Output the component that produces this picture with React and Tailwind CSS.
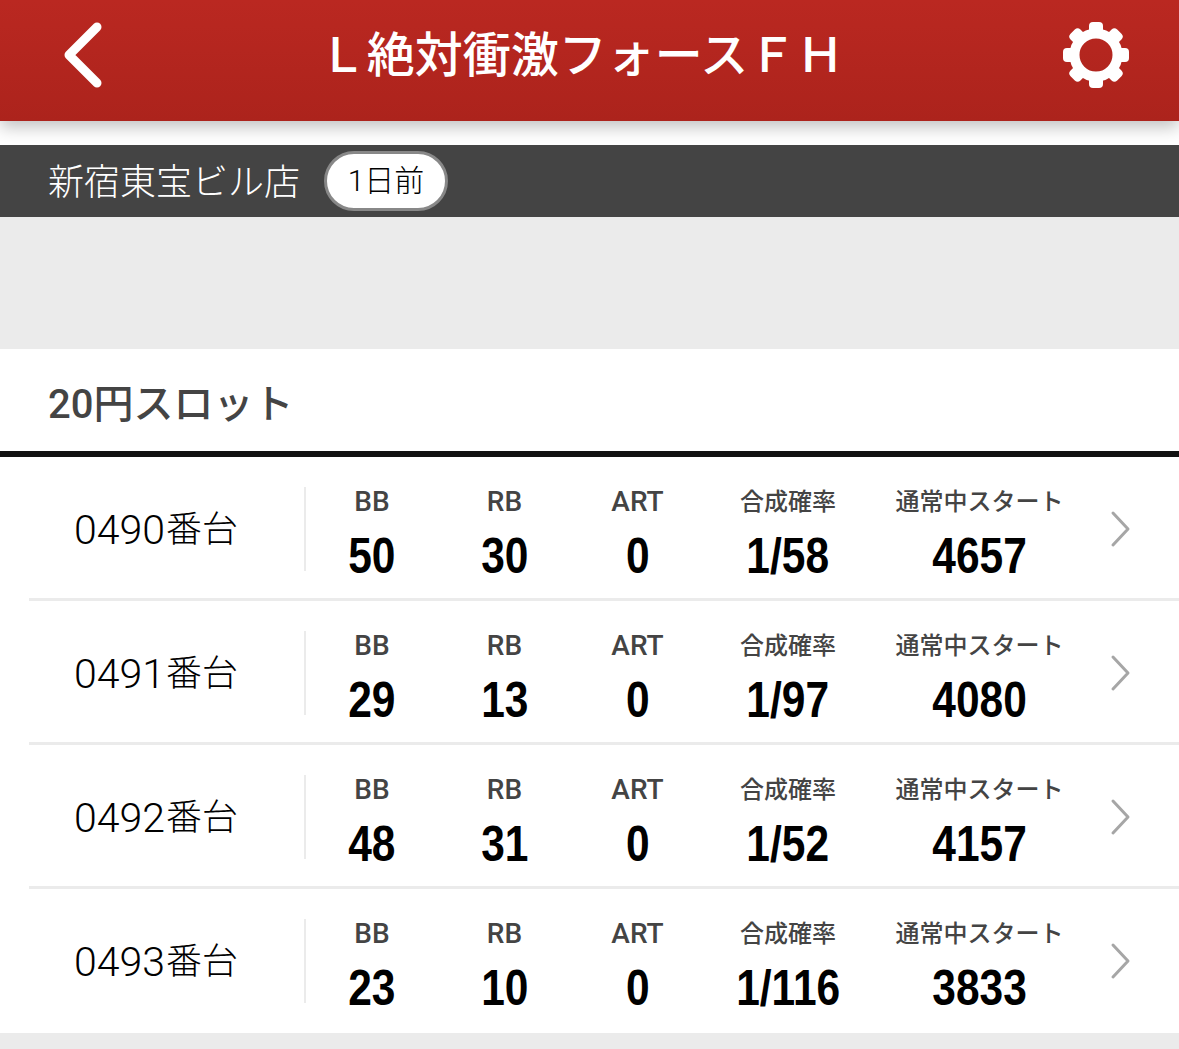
const rows = [
  { num: "0490", bb: 50, rb: 30, art: 0, rate: "1/58", start: 4657 },
  { num: "0491", bb: 29, rb: 13, art: 0, rate: "1/97", start: 4080 },
  { num: "0492", bb: 48, rb: 31, art: 0, rate: "1/52", start: 4157 },
  { num: "0493", bb: 23, rb: 10, art: 0, rate: "1/116", start: 3833 },
];

function Gear() {
  const teeth = [0, 45, 90, 135, 180, 225, 270, 315];
  return (
    <svg width="68" height="68" viewBox="0 0 68 68" fill="#fff">
      {teeth.map((a) => (
        <rect key={a} x="27" y="1" width="14" height="14" rx="4" transform={`rotate(${a} 34 34)`} />
      ))}
      <circle cx="34" cy="34" r="21.5" fill="none" stroke="#fff" strokeWidth="10" />
    </svg>
  );
}

function Stat({ label, value, className, labelSize = "text-[24px]" }) {
  return (
    <div className={`flex flex-col items-center shrink-0 ${className}`}>
      <div className={`h-[30px] leading-[30px] text-[#444] whitespace-nowrap ${labelSize}`}>{label}</div>
      <div className="mt-[12px] text-[50px] leading-[54px] font-bold text-black scale-x-[0.85] font-['Liberation_Sans',sans-serif]">
        {value}
      </div>
    </div>
  );
}

function Row({ row, last }) {
  return (
    <div className={`h-[144px] ml-[29px] flex items-center box-border pt-[2px] border-b-[3px] ${last ? "border-transparent" : "border-[#ebebeb]"}`}>
      <div className="w-[277px] h-[84px] shrink-0 flex items-center pl-[45px] border-r-2 border-[#ebebeb] text-black font-light">
        <span className="text-[41px] leading-none mt-[3px]">{row.num}</span>
        <span className="text-[36px] leading-none mt-[3px] ml-[1px]">番台</span>
      </div>
      <div className="flex pt-[12px]">
        <Stat label="BB" value={row.bb} className="w-[132px]" labelSize="text-[28px] font-medium" />
        <Stat label="RB" value={row.rb} className="w-[133px]" labelSize="text-[28px] font-medium" />
        <Stat label="ART" value={row.art} className="w-[133px]" labelSize="text-[28px] font-medium" />
        <Stat label="合成確率" value={row.rate} className="w-[168px]" labelSize="text-[24px] font-medium" />
        <Stat label="通常中スタート" value={row.start} className="w-[215px]" labelSize="text-[24px] font-medium" />
      </div>
      <svg className="ml-[23px] shrink-0" width="21" height="38" viewBox="0 0 21 38" fill="none" stroke="#a6a6a6" strokeWidth="3" strokeLinecap="round" strokeLinejoin="round">
        <path d="M3 3l15 16L3 35" />
      </svg>
    </div>
  );
}

export default function App() {
  return (
    <div className="w-[1179px] h-[1049px] overflow-hidden bg-[#ebebeb] font-['Roboto','Noto_Sans_CJK_JP',sans-serif]">
      <div className="bg-white h-[145px]">
        <header className="relative h-[121px] flex items-center justify-between pl-[60px] pr-[49px] pb-[11px] box-border bg-gradient-to-b from-[#ba2821] to-[#ac231c] shadow-[0_6px_16px_rgba(0,0,0,0.25)]">
          <svg width="46" height="68" viewBox="0 0 46 68" fill="none" stroke="#fff" strokeWidth="9" strokeLinecap="round" strokeLinejoin="round">
            <path d="M37 6L9 34l28 28" />
          </svg>
          <h1 className="text-[48px] leading-none font-medium text-white whitespace-nowrap mr-[5px] mt-[2px]">Ｌ絶対衝激フォースＦＨ</h1>
          <Gear />
        </header>
      </div>

      <div className="h-[72px] bg-[#444] flex items-center pl-[48px] text-white">
        <span className="text-[36px] font-light leading-none mt-[4px]">新宿東宝ビル店</span>
        <span className="ml-[24px] w-[124px] h-[60px] flex items-center justify-center rounded-full bg-white border-[3px] border-[#888] text-black text-[30px] font-light leading-none">
          1日前
        </span>
      </div>

      <div className="h-[132px]" />

      <div className="h-[102px] bg-white flex items-center pl-[48px] pt-[10px] text-[40px] font-medium text-[#444]">
        20円スロット
      </div>

      <div className="bg-white border-t-[6px] border-[#111]">
        {rows.map((row, i) => (
          <Row key={row.num} row={row} last={i === rows.length - 1} />
        ))}
      </div>
    </div>
  );
}
